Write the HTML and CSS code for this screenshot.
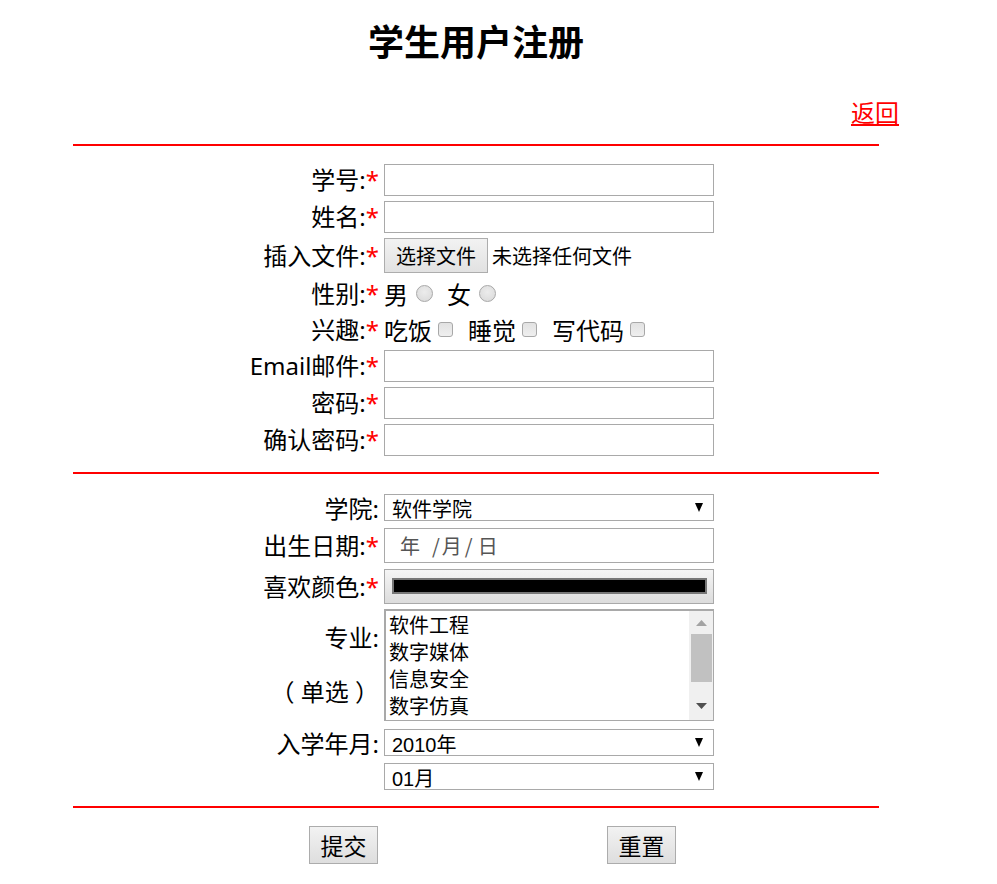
FILE: index.html
```html
<!DOCTYPE html>
<html lang="zh-CN">
<head>
<meta charset="utf-8">
<title>学生用户注册</title>
<link rel="stylesheet" href="styles.css">
</head>
<body>
<div class="page">
  <h1 class="title">学生用户注册</h1>
  <div class="back-row"><a href="#" class="back">返回</a></div>
  <hr class="rule">
  <form class="form" onsubmit="return false">
    <div class="grid g1">
      <label class="lbl">学号:<span class="req">*</span></label>
      <input class="text" type="text">
      <label class="lbl">姓名:<span class="req">*</span></label>
      <input class="text" type="text">
      <label class="lbl">插入文件:<span class="req">*</span></label>
      <div class="file"><button type="button" class="file-btn">选择文件</button><span class="file-name">未选择任何文件</span></div>
      <label class="lbl">性别:<span class="req">*</span></label>
      <div class="choices"><span>男</span><input type="radio" name="sex" class="radio"><span>女</span><input type="radio" name="sex" class="radio"></div>
      <label class="lbl">兴趣:<span class="req">*</span></label>
      <div class="choices"><span>吃饭</span><input type="checkbox" class="check"><span>睡觉</span><input type="checkbox" class="check"><span>写代码</span><input type="checkbox" class="check"></div>
      <label class="lbl">Email邮件:<span class="req">*</span></label>
      <input class="text" type="text">
      <label class="lbl">密码:<span class="req">*</span></label>
      <input class="text" type="password">
      <label class="lbl">确认密码:<span class="req">*</span></label>
      <input class="text" type="password">
    </div>
    <hr class="rule rule2">
    <div class="grid g2">
      <label class="lbl">学院:</label>
      <div class="select"><span class="select-text">软件学院</span><svg class="arrow" width="8" height="9" viewBox="0 0 8 9"><path d="M0 0H8L4 9Z" fill="#000"/></svg></div>
      <label class="lbl">出生日期:<span class="req">*</span></label>
      <div class="date"><span>年</span><span class="sep">/</span><span>月</span><span class="sep2">/</span><span>日</span></div>
      <label class="lbl">喜欢颜色:<span class="req">*</span></label>
      <div class="color"><div class="swatch"></div></div>
      <label class="lbl lbl-major">专业:<br><br>（ 单选 ）</label>
      <div class="listbox">
        <div class="options">
          <div>软件工程</div>
          <div>数字媒体</div>
          <div>信息安全</div>
          <div>数字仿真</div>
        </div>
        <div class="scrollbar">
          <div class="sb-btn"><svg width="11" height="6" viewBox="0 0 11 6"><path d="M5.5 0L11 6H0Z" fill="#a3a3a3"/></svg></div>
          <div class="sb-thumb"></div>
          <div class="sb-space"></div>
          <div class="sb-btn sb-down"><svg width="11" height="6" viewBox="0 0 11 6"><path d="M0 0H11L5.5 6Z" fill="#505050"/></svg></div>
        </div>
      </div>
      <label class="lbl">入学年月:</label>
      <div class="select"><span class="select-text">2010年</span><svg class="arrow" width="8" height="9" viewBox="0 0 8 9"><path d="M0 0H8L4 9Z" fill="#000"/></svg></div>
      <span class="lbl"></span>
      <div class="select"><span class="select-text">01月</span><svg class="arrow" width="8" height="9" viewBox="0 0 8 9"><path d="M0 0H8L4 9Z" fill="#000"/></svg></div>
    </div>
    <hr class="rule rule3">
    <div class="actions">
      <button type="submit" class="btn">提交</button>
      <button type="reset" class="btn">重置</button>
    </div>
  </form>
</div>
</body>
</html>
```

FILE: styles.css
```css
body {
  margin: 0;
  font-family: "Noto Sans", "Noto Sans CJK SC", sans-serif;
  color: #000;
  background: #fff;
}

.page {
  width: 806px;
  margin-left: 73px;
}

.title {
  margin: 0;
  padding-top: 14px;
  font-family: "Noto Sans CJK SC", sans-serif;
  font-size: 36px;
  line-height: 52px;
  font-weight: 700;
  text-align: center;
}

.back-row {
  display: flex;
  justify-content: flex-end;
  margin: 31px -20px 0 0;
  font-size: 24px;
  line-height: 30px;
}

.back {
  color: #f00;
  text-decoration: underline;
  font-family: "Noto Sans CJK SC", sans-serif;
}

.rule {
  border: 0;
  height: 2px;
  background: #f00;
  margin: 17px 0 0;
}

.rule2 {
  margin-top: 16px;
}

.rule3 {
  margin-top: 16px;
}

.grid {
  display: grid;
  grid-template-columns: 306px 330px;
  column-gap: 5px;
  row-gap: 5px;
  font-size: 24px;
  align-items: center;
}

.g1 {
  margin-top: 18px;
  grid-template-rows: 32px 32px 35px 31px 31px 32px 32px 32px;
}

.g2 {
  margin-top: 20px;
  grid-template-rows: 29px 36px 35px 115px 29px 27px;
}

.lbl {
  text-align: right;
  line-height: 28px;
  white-space: nowrap;
}

.lbl-major {
  align-self: start;
  padding-top: 15px;
  line-height: 27px;
}

.req {
  color: #f00;
}

.text {
  box-sizing: border-box;
  width: 330px;
  height: 32px;
  margin: 0;
  padding: 0 4px;
  border: 1px solid #a9a9a9;
  background: #fff;
  font-size: 20px;
}

.file {
  display: flex;
  align-items: center;
  gap: 4px;
  font-size: 20px;
  font-family: "Noto Sans CJK SC", sans-serif;
}

.file-btn {
  box-sizing: border-box;
  width: 104px;
  height: 35px;
  padding: 0;
  border: 1px solid #adadad;
  background: linear-gradient(#f2f2f2, #e2e2e2);
  font-family: "Noto Sans CJK SC", sans-serif;
  font-size: 20px;
  color: #000;
}

.choices {
  display: flex;
  align-items: center;
  font-family: "Noto Sans CJK SC", sans-serif;
  font-size: 24px;
  line-height: 28px;
}

.radio {
  appearance: none;
  box-sizing: border-box;
  width: 17px;
  height: 17px;
  margin: 0 14px 0 8px;
  border: 1px solid #a8a8a8;
  border-radius: 50%;
  background: radial-gradient(circle at 50% 40%, #ececec 0%, #d8d8d8 100%);
}

.check {
  appearance: none;
  box-sizing: border-box;
  width: 15px;
  height: 15px;
  margin: 0 15px 0 6px;
  border: 1px solid #a8a8a8;
  border-radius: 3px;
  background: linear-gradient(#e2e2e2, #efefef);
}

.select {
  box-sizing: border-box;
  height: 27px;
  align-self: start;
  display: flex;
  justify-content: space-between;
  align-items: flex-start;
  overflow: hidden;
  border: 1px solid #a9a9a9;
  padding-left: 7px;
  font-family: "Liberation Sans", "Noto Sans CJK SC", sans-serif;
  font-size: 20px;
}

.select-text {
  line-height: 29px;
  padding-top: 1px;
  white-space: nowrap;
}

.arrow {
  align-self: center;
  margin-right: 10px;
  flex: none;
}

.date {
  box-sizing: border-box;
  height: 35px;
  align-self: start;
  display: flex;
  align-items: center;
  border: 1px solid #a9a9a9;
  padding-left: 15px;
  font-family: "Noto Sans CJK SC", sans-serif;
  font-size: 20px;
  color: #555;
}

.sep {
  margin: 0 2px 0 12px;
}

.sep2 {
  margin: 0 5px 0 3px;
}

.color {
  box-sizing: border-box;
  height: 35px;
  align-self: start;
  border: 1px solid #a9a9a9;
  background: linear-gradient(#f5f5f5, #dcdcdc);
  padding: 8px 6px 9px 7px;
}

.swatch {
  box-sizing: border-box;
  height: 16px;
  border: 2px solid #777;
  background: #000;
}

.listbox {
  box-sizing: border-box;
  height: 112px;
  align-self: start;
  display: flex;
  border: 2px solid #a9a9a9;
  border-right-width: 1px;
  border-bottom-width: 1px;
  font-family: "Noto Sans CJK SC", sans-serif;
  font-size: 20px;
}

.options {
  flex: 1;
  padding-left: 3px;
  line-height: 27px;
  overflow: hidden;
}

.scrollbar {
  width: 24px;
  background: #f0f0f0;
  display: flex;
  flex-direction: column;
}

.sb-btn {
  height: 23px;
  display: flex;
  align-items: center;
  justify-content: center;
  padding-left: 1px;
}

.sb-thumb {
  height: 48px;
  margin: 0 1px 0 2px;
  background: #c1c1c1;
}

.sb-space {
  flex: 1;
}

.sb-down {
  margin-bottom: 3px;
}

.actions {
  display: flex;
  margin-top: 18px;
  padding-left: 236px;
  gap: 229px;
}

.btn {
  box-sizing: border-box;
  width: 69px;
  height: 38px;
  padding: 0;
  border: 1px solid #acacac;
  background: linear-gradient(#f2f2f2, #dedede);
  font-family: "Noto Sans CJK SC", sans-serif;
  font-size: 23px;
  color: #000;
}
```
